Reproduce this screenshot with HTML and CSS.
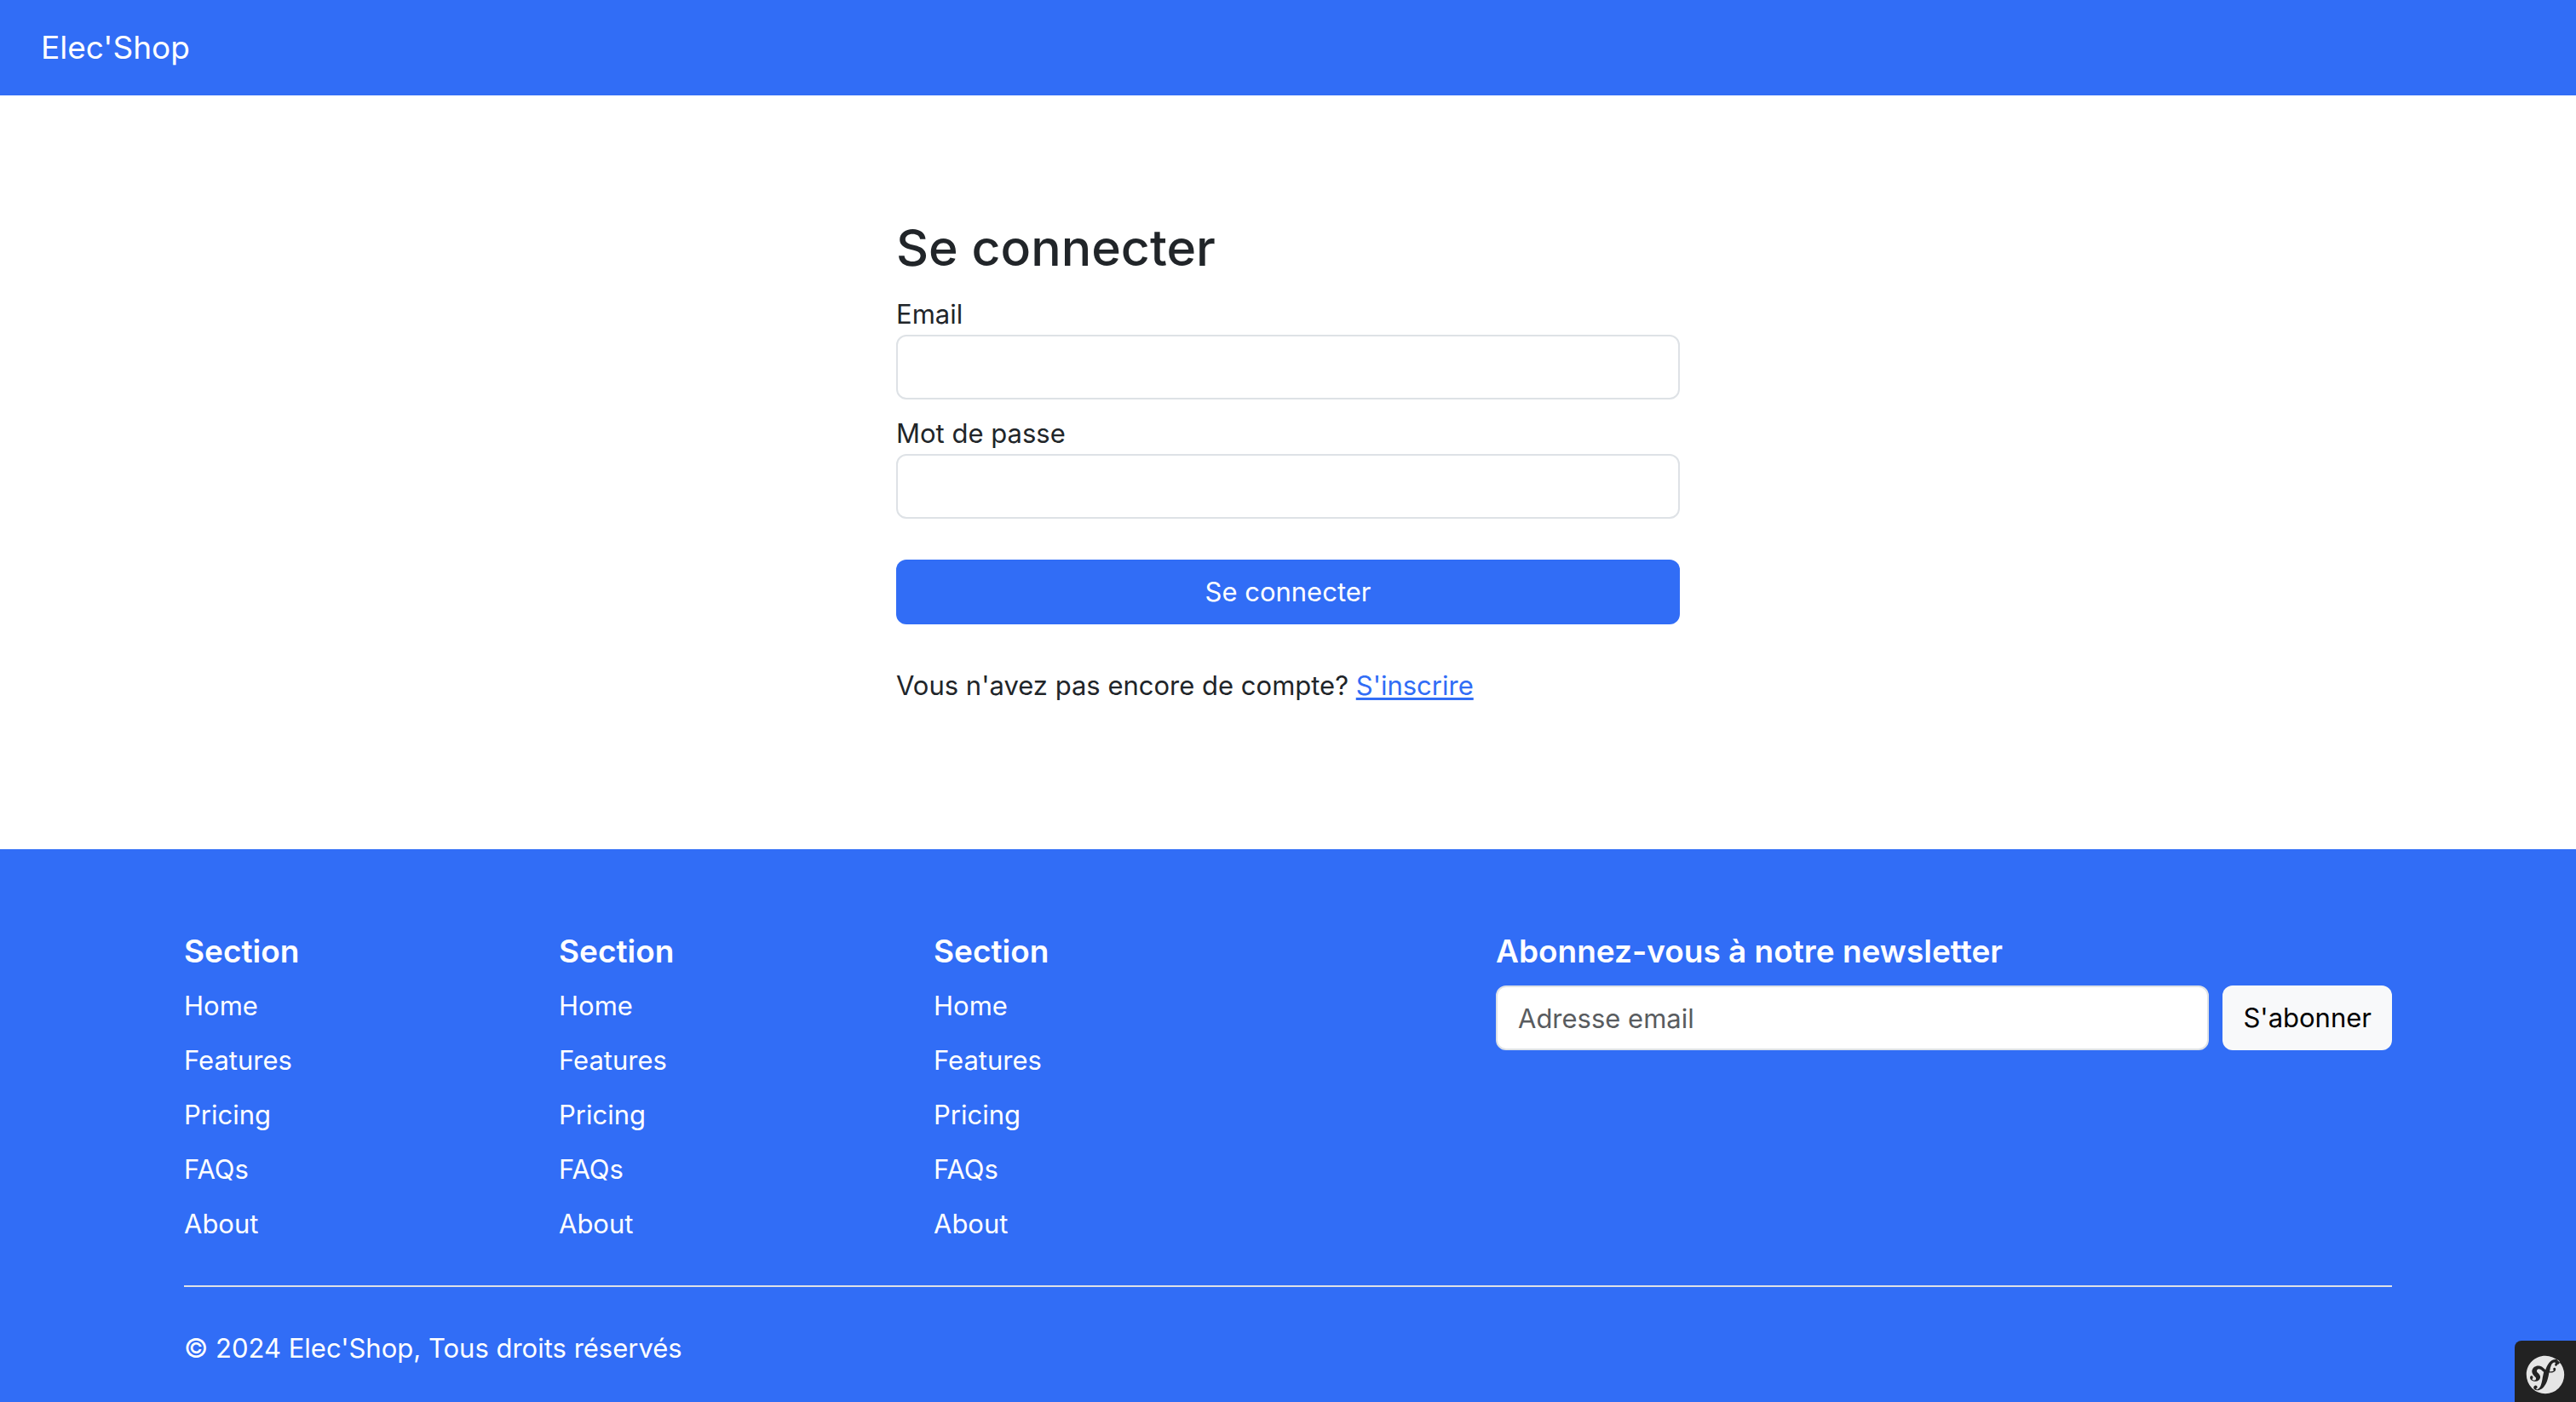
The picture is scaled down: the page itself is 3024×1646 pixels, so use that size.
FILE: index.html
```html
<!DOCTYPE html>
<html lang="fr">
<head>
  <meta charset="utf-8">
  <meta name="viewport" content="width=device-width, initial-scale=1">
  <title>Se connecter</title>
  <link rel="stylesheet" href="styles.css">
</head>
<body>
  <nav class="navbar">
    <a class="brand" href="#">Elec'Shop</a>
  </nav>

  <main class="login">
    <form class="login-form">
      <h1 class="login-title">Se connecter</h1>
      <div class="field">
        <label for="email">Email</label>
        <input class="control" type="email" id="email" name="email">
      </div>
      <div class="field">
        <label for="password">Mot de passe</label>
        <input class="control" type="password" id="password" name="password">
      </div>
      <button class="btn btn-primary" type="submit">Se connecter</button>
      <p class="signup">Vous n'avez pas encore de compte? <a href="#">S'inscrire</a></p>
    </form>
  </main>

  <footer class="footer">
    <div class="container">
      <div class="footer-row">
        <section class="links">
          <h2 class="footer-title">Section</h2>
          <ul>
            <li><a href="#">Home</a></li>
            <li><a href="#">Features</a></li>
            <li><a href="#">Pricing</a></li>
            <li><a href="#">FAQs</a></li>
            <li><a href="#">About</a></li>
          </ul>
        </section>
        <section class="links">
          <h2 class="footer-title">Section</h2>
          <ul>
            <li><a href="#">Home</a></li>
            <li><a href="#">Features</a></li>
            <li><a href="#">Pricing</a></li>
            <li><a href="#">FAQs</a></li>
            <li><a href="#">About</a></li>
          </ul>
        </section>
        <section class="links">
          <h2 class="footer-title">Section</h2>
          <ul>
            <li><a href="#">Home</a></li>
            <li><a href="#">Features</a></li>
            <li><a href="#">Pricing</a></li>
            <li><a href="#">FAQs</a></li>
            <li><a href="#">About</a></li>
          </ul>
        </section>
        <form class="newsletter">
          <h2 class="footer-title">Abonnez-vous à notre newsletter</h2>
          <div class="newsletter-row">
            <input class="control" type="email" name="newsletter" placeholder="Adresse email" aria-label="Adresse email">
            <button class="btn btn-light" type="button">S'abonner</button>
          </div>
        </form>
      </div>
      <p class="copyright">© 2024 Elec'Shop, Tous droits réservés</p>
    </div>
  </footer>

  <button class="debug-toggle" type="button" aria-label="Symfony">
    <svg viewBox="0 0 24 24" aria-hidden="true"><path fill="#e5e5e5" d="M12 .9C5.8.9.9 5.8.9 12a11.1 11.1 0 1 0 22.2 0A11.1 11.1 0 0 0 12 .9zm6.5 6c-.6 0-.9-.3-.9-.8 0-.2 0-.4.2-.6l.2-.4c0-.3-.5-.4-.6-.4-1.8.1-2.3 2.5-2.7 4.4l-.2 1c1 .2 1.8 0 2.2-.3.6-.4-.2-.7-.1-1.2.1-.5.5-.7.8-.7.5 0 .7.4.7 1 0 .8-1.1 2-3.3 1.9l-.6 0-.4 2.1c-.4 1.7-.9 4.1-2.7 6.2-1.5 1.8-3.1 2-3.8 2-1.3 0-2.2-.7-2.2-1.6 0-.8.7-1.3 1.2-1.3.6 0 1 .5 1 1s-.2.6-.4.7c-.1.1-.3.2-.3.4 0 .1.1.3.4.3.5 0 .8-.3 1.1-.5 1.2-.9 1.6-2.6 2.2-5.7l.1-.8.7-3.2c-.8-.6-1.3-1.4-2.4-1.7-.7-.2-1.2 0-1.5.4-.4.5-.2 1.1.1 1.5l.7.7c.7.9 1.2 1.6 1 2.5-.3 1.5-2 2.6-4 1.9-1.8-.5-2.1-1.8-1.9-2.5.2-.6.6-.7 1.1-.6.5.2.6.7.5 1.2l-.1.3c-.2.1-.3.3-.3.4-.1.4.4.6.7.7.7.2 1.3-.2 1.5-.6.2-.6-.2-1.1-.4-1.2l-.9-1c-.4-.5-1.4-1.8-.9-3.3.2-.6.6-1.2 1.1-1.6 1.1-.8 2.3-1 3.5-.6 1.5.4 2.3 1.5 3.2 2.2.5-1.5 1.2-3 2.2-4.2.9-1.1 2.2-1.9 3.6-1.9 1.4-.1 2.5.6 2.5 1.6 0 .4-.2 1.3-1.1 1.3z"/></svg>
  </button>
</body>
</html>
```

FILE: styles.css
```css
* {
  box-sizing: border-box;
}

body {
  display: flex;
  flex-direction: column;
  min-height: 100vh;
  margin: 0;
  background: #fff;
  color: #212529;
  font-family: Inter, "Liberation Sans", sans-serif;
  font-size: 31px;
  line-height: 48px;
}

h1, h2, p, ul {
  margin: 0;
  padding: 0;
}

ul {
  list-style: none;
}

.navbar {
  display: flex;
  align-items: center;
  min-height: 112px;
  padding: 16px 48px;
  background: #316df6;
}

.brand {
  color: #fff;
  font-size: 37px;
  line-height: 60px;
  text-decoration: none;
}

.login {
  padding: 140px 48px 168px;
}

.login-form {
  display: flex;
  flex-direction: column;
  gap: 16px;
  max-width: 920px;
  margin: 0 auto;
}

.login-title {
  font-size: 59px;
  font-weight: 500;
  line-height: 77px;
}

.field {
  display: flex;
  flex-direction: column;
}

.control {
  width: 100%;
  height: 76px;
  padding: 12px 24px;
  border: 2px solid #dee2e6;
  border-radius: 12px;
  background: #fff;
  color: #212529;
  font: inherit;
}

.control::placeholder {
  color: #595c5f;
  opacity: 1;
}

.btn {
  height: 76px;
  padding: 0 24px;
  border: 0;
  border-radius: 12px;
  font: inherit;
  white-space: nowrap;
}

.btn-primary {
  margin: 32px 0;
  background: #316df6;
  color: #fff;
}

.signup a {
  color: #316df6;
  text-underline-offset: 3px;
  text-decoration-thickness: 3px;
}

.footer {
  flex: 1;
  padding: 96px 48px 39px;
  background: #316df6;
  color: #fff;
}

.container {
  max-width: 2592px;
  margin: 0 auto;
}

.footer-row {
  display: grid;
  grid-template-columns: repeat(12, 1fr);
  column-gap: 48px;
  padding-bottom: 48px;
}

.links {
  grid-column: span 2;
}

.links ul {
  display: flex;
  flex-direction: column;
  gap: 16px;
}

.links a {
  color: #fff;
  text-decoration: none;
}

.footer-title {
  margin-bottom: 16px;
  font-size: 37px;
  font-weight: 600;
  line-height: 48px;
}

.newsletter {
  grid-column: 8 / span 5;
}

.newsletter-row {
  display: flex;
  gap: 16px;
}

.newsletter-row .control {
  flex: 1;
  min-width: 0;
}

.btn-light {
  background: #f8f9fa;
  color: #000;
}

.copyright {
  padding-top: 48px;
  border-top: 2px solid #dee2e6;
}

/* Debug toolbar toggle, pinned over the page corner */
.debug-toggle {
  position: fixed;
  right: 0;
  bottom: 0;
  display: flex;
  align-items: center;
  justify-content: center;
  width: 72px;
  height: 72px;
  padding: 8px 0 0;
  border: 0;
  border-radius: 8px 0 0;
  background: #222;
}

.debug-toggle svg {
  width: 48px;
  height: 48px;
}
```
